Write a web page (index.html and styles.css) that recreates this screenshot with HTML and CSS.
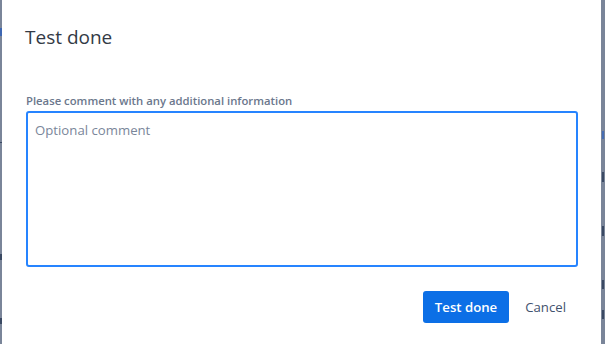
FILE: index.html
```html
<!DOCTYPE html>
<html lang="en">
<head>
    <meta charset="UTF-8">
    <title>Test done</title>
    <link rel="stylesheet" href="styles.css">
</head>
<body>
    <div class="backdrop">
        <div class="edge edge-left">
            <span class="mark mark-a"></span>
            <span class="mark mark-b"></span>
            <span class="mark mark-c"></span>
            <span class="mark mark-d"></span>
        </div>

        <div class="modal">
            <div class="modal-header">
                <h1>Test done</h1>
            </div>

            <div class="modal-body">
                <label class="field-label" for="comment">Please comment with any additional information</label>
                <textarea id="comment" class="comment-input" placeholder="Optional comment" autofocus></textarea>
            </div>

            <div class="modal-footer">
                <button class="btn btn-primary">Test done</button>
                <button class="btn btn-subtle">Cancel</button>
            </div>
        </div>

        <div class="edge edge-right">
            <span class="mark mark-e"></span>
            <span class="mark mark-f"></span>
            <span class="mark mark-g"></span>
            <span class="mark mark-h"></span>
            <span class="mark mark-i"></span>
        </div>
    </div>
</body>
</html>
```

FILE: styles.css
```css
:root {
    --blanket: #7a8599;
    --text-primary: #172b4d;
    --text-subtle: #6b778c;
    --placeholder: #7a869a;
    --accent-color: #0c6fe6;
    --focus-color: #2684ff;
    --cancel-color: #42526e;
}

* {
    margin: 0;
    padding: 0;
    box-sizing: border-box;
}

body {
    font-family: 'Open Sans', 'Noto Sans', sans-serif;
    background-color: var(--blanket);
    color: var(--text-primary);
    overflow: hidden;
}

.backdrop {
    display: flex;
    height: 344px;
}

.edge {
    display: flex;
    flex-direction: column;
    position: relative;
}

.edge-left {
    width: 2px;
}

.edge-right {
    width: 4px;
}

/* bits of the page underneath, peeking out beside the dialog */
.mark {
    position: absolute;
    background-color: #2b3a55;
    opacity: 0.8;
}

.mark-a { top: 28px; left: 0; width: 2px; height: 8px; background-color: #2f5fb8; }
.mark-b { top: 142px; left: 0; width: 2px; height: 1px; }
.mark-c { top: 254px; left: 0; width: 2px; height: 6px; }
.mark-d { top: 318px; left: 0; width: 2px; height: 6px; }
.mark-e { top: 131px; left: 1px; width: 2px; height: 8px; background-color: #3a66b8; }
.mark-f { top: 172px; left: 1px; width: 2px; height: 10px; }
.mark-g { top: 226px; left: 1px; width: 2px; height: 10px; }
.mark-h { top: 280px; left: 1px; width: 2px; height: 9px; }
.mark-i { top: 310px; left: 1px; width: 2px; height: 9px; }

.modal {
    flex: 1;
    background-color: #ffffff;
    display: flex;
    flex-direction: column;
}

.modal-header {
    padding: 25px 24px 0 23px;
}

.modal-header h1 {
    font-size: 19px;
    font-weight: 400;
    line-height: 24px;
    color: #333a45;
}

.modal-body {
    padding: 44px 23px 0 24px;
    display: flex;
    flex-direction: column;
}

.field-label {
    font-size: 11.3px;
    font-weight: 600;
    line-height: 16px;
    color: var(--text-subtle);
    margin-bottom: 2px;
}

.comment-input {
    width: 100%;
    height: 156px;
    resize: none;
    border: 2px solid var(--focus-color);
    border-radius: 3px;
    padding: 7px 7px;
    font-family: inherit;
    font-size: 13.2px;
    line-height: 20px;
    color: var(--text-primary);
    caret-color: var(--text-primary);
    outline: none;
}

.comment-input::placeholder {
    color: var(--placeholder);
}

.modal-footer {
    display: flex;
    justify-content: flex-end;
    gap: 4px;
    padding: 24px 23px 0 24px;
}

.btn {
    height: 32px;
    padding: 0 12px;
    border: none;
    border-radius: 3px;
    font-family: inherit;
    font-size: 13.2px;
    font-weight: 600;
    cursor: pointer;
}

.btn-primary {
    background-color: var(--accent-color);
    color: #ffffff;
}

.btn-subtle {
    background-color: transparent;
    color: var(--cancel-color);
    font-weight: 500;
}
```
